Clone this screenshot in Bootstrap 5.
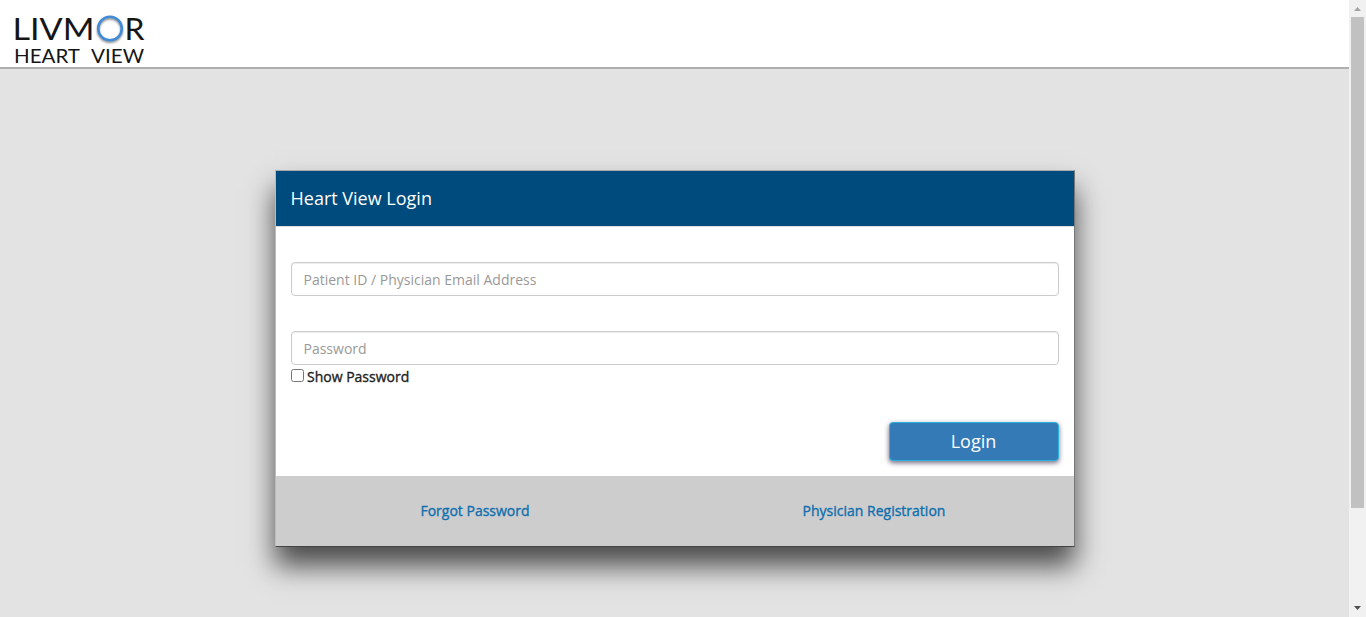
<!DOCTYPE html>
<html lang="en">
<head>
<meta charset="utf-8">
<title>Heart View Login</title>
<link rel="stylesheet" href="https://cdn.jsdelivr.net/npm/bootstrap@5.3.0/dist/css/bootstrap.min.css">
<style>
html,body{height:100%;overflow:hidden}
body{font-family:"Open Sans",sans-serif;font-size:14px;line-height:20px;color:#333;background:#e3e3e3}
.topbar{height:69px;background:#fff;border-bottom:2px solid #aeaeae}
.topbar svg{display:block}
.login-card{width:800px;height:377px;margin:101px 0 0 274.5px;border:1px solid;border-color:#aaa #777 #444 #bbb;border-radius:0;background:#fff;box-shadow:0 19px 26px rgba(0,0,0,.67)}
.login-card .card-header{height:56px;padding:0 15px 2px;background:#004b7d;color:#fff;font-size:18px;border-bottom:1px solid #ddd;border-radius:0}
.login-card .card-body{height:249px;padding:35px 15px 0}
.login-card .form-control{height:34px;padding:6px 12px;font-size:14px;line-height:20px;border:1px solid #ccc;border-radius:4px;box-shadow:inset 0 1px 1px rgba(0,0,0,.075)}
.login-card .form-control::placeholder{color:#999}
.second-field{margin-top:35px}
.show-check{width:13px;height:13px;margin:2px 3.500px 0 0}
.faux-bold{-webkit-text-stroke:.35px currentColor}
.show-row{margin-top:2px;color:#222}
.btn-login{width:170px;height:39px;margin-top:35px;padding:0 0 1px;font-size:18px;color:#fff;background:#337ab7;border:1px solid #2bb3dc;border-radius:4px;box-shadow:0 2px 5px rgba(20,10,50,.6)}
.login-card .card-footer{height:70px;padding:0;background:#cdcdcd;border:0;border-radius:0}
.login-card .card-footer a{color:#0f6fae}
.rail{width:17px;background:#f1f1f1}
.thumb{width:13px;height:491px;background:#c1c1c1}
</style>
</head>
<body>
<div class="d-flex h-100">
  <main class="flex-grow-1">
    <header class="topbar">
      <svg width="160" height="67" role="img" aria-label="Livmor Heart View">
        <defs><filter id="soft" x="-30%" y="-30%" width="160%" height="160%"><feGaussianBlur stdDeviation="1"/></filter></defs>
        <g font-family="Lato, sans-serif" fill="#151515">
          <text x="12.500" y="40" font-size="31" textLength="82" lengthAdjust="spacingAndGlyphs">LIVM</text>
          <text x="124.500" y="40" font-size="31" textLength="20" lengthAdjust="spacingAndGlyphs">R</text>
          <text x="14" y="63" font-size="19.500" textLength="66" lengthAdjust="spacingAndGlyphs">HEART</text>
          <text x="91" y="63" font-size="19.500" textLength="53" lengthAdjust="spacingAndGlyphs">VIEW</text>
        </g>
        <circle cx="110" cy="30" r="11.800" fill="none" stroke="#888" stroke-width="2.500" filter="url(#soft)"/>
        <circle cx="110" cy="28.500" r="11.800" fill="none" stroke="#3f8bd8" stroke-width="2.500"/>
      </svg>
    </header>
    <form class="card login-card">
      <div class="card-header d-flex align-items-center">Heart View Login</div>
      <div class="card-body">
        <input class="form-control" type="text" placeholder="Patient ID / Physician Email Address">
        <input class="form-control second-field" type="password" placeholder="Password">
        <label class="d-flex show-row"><input type="checkbox" class="show-check"><span class="faux-bold">Show Password</span></label>
        <div class="d-flex justify-content-end"><button type="button" class="btn btn-login">Login</button></div>
      </div>
      <div class="card-footer">
        <div class="row g-0 h-100 align-items-center text-center">
          <div class="col-6"><a href="#" class="text-decoration-none faux-bold">Forgot Password</a></div>
          <div class="col-6"><a href="#" class="text-decoration-none faux-bold">Physician Registration</a></div>
        </div>
      </div>
    </form>
  </main>
  <div class="rail d-flex flex-column align-items-center flex-shrink-0" aria-hidden="true">
    <svg width="17" height="17"><path d="M5 11h7l-3.500-4z" fill="#a3a3a3"/></svg>
    <div class="thumb"></div>
    <svg class="mt-auto" width="17" height="17"><path d="M5 6h7l-3.500 4z" fill="#505050"/></svg>
  </div>
</div>
<script src="https://cdn.jsdelivr.net/npm/bootstrap@5.3.0/dist/js/bootstrap.bundle.min.js"></script>
</body>
</html>
